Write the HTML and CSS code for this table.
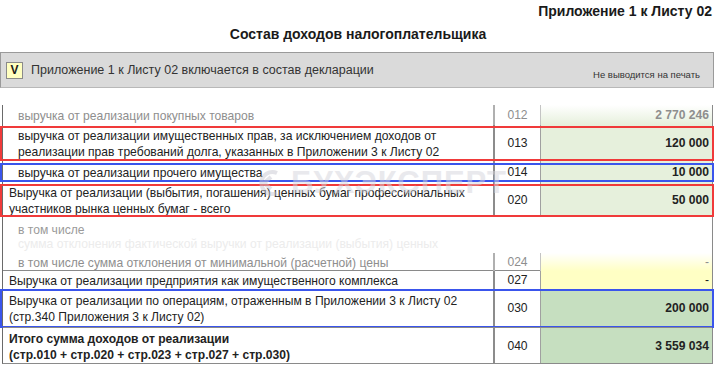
FILE: index.html
```html
<!DOCTYPE html>
<html lang="ru">
<head>
<meta charset="utf-8">
<link rel="stylesheet" href="styles.css">
</head>
<body>
<div class="page">
  <div class="app-no">Приложение 1 к Листу 02</div>
  <div class="title">Состав доходов налогоплательщика</div>
  <div class="bar">
    <div class="check">V</div>
    <div class="bar-text">Приложение 1 к Листу 02 включается в состав декларации</div>
    <div class="noprint">Не выводится на печать</div>
  </div>
  <div class="table">
    <div class="row r012 dim">
      <div class="desc ind">выручка от реализации покупных товаров</div>
      <div class="code">012</div>
      <div class="val fade-green">2 770 246</div>
    </div>
    <div class="row r013 box-red">
      <div class="desc ind">выручка от реализации имущественных прав, за исключением доходов от<br>реализации прав требований долга, указанных в Приложении 3 к Листу 02</div>
      <div class="code">013</div>
      <div class="val green">120 000</div>
    </div>
    <div class="row r014 box-blue">
      <div class="desc ind">выручка от реализации прочего имущества</div>
      <div class="code">014</div>
      <div class="val green">10 000</div>
    </div>
    <div class="row r020 box-red">
      <div class="desc">Выручка от реализации (выбытия, погашения) ценных бумаг профессиональных<br>участников рынка ценных бумаг - всего</div>
      <div class="code">020</div>
      <div class="val green">50 000</div>
    </div>
    <div class="fade-block">
      <div class="fade-line l1">в том числе</div>
      <div class="fade-line l2">сумма отклонения фактической выручки от реализации (выбытия) ценных</div>
    </div>
    <div class="row r024 dim">
      <div class="desc ind">в том числе сумма отклонения от минимальной (расчетной) цены</div>
      <div class="code">024</div>
      <div class="val fade-yellow plain">-</div>
    </div>
    <div class="row r027">
      <div class="desc">Выручка от реализации предприятия как имущественного комплекса</div>
      <div class="code">027</div>
      <div class="val yellow plain">-</div>
    </div>
    <div class="row r030 box-blue">
      <div class="desc">Выручка от реализации по операциям, отраженным в Приложении 3 к Листу 02<br>(стр.340 Приложения 3 к Листу 02)</div>
      <div class="code">030</div>
      <div class="val dgreen">200 000</div>
    </div>
    <div class="row r040 sep">
      <div class="desc bold">Итого сумма доходов от реализации<br>(стр.010 + стр.020 + стр.023 + стр.027 + стр.030)</div>
      <div class="code">040</div>
      <div class="val dgreen">3 559 034</div>
    </div>
    <div class="watermark">
      <svg class="wm-logo" width="28" height="30" viewBox="0 0 28 30"><path d="M22 5 A11 11 0 1 0 22 25" fill="none" stroke="#c8c8d2" stroke-width="4"/><path d="M16 9 L9 15 L16 21" fill="none" stroke="#c8c8d2" stroke-width="4"/></svg>
      <span class="wm-text">БУХЭКСПЕРТ</span>
    </div>
  </div>
</div>
</body>
</html>
```
FILE: styles.css
```css
* { box-sizing: border-box; }
body {
  margin: 0;
  background: #fff;
  font-family: "Liberation Sans", Arial, sans-serif;
  color: #1a1a1a;
}
.page { width: 716px; height: 365px; overflow: hidden; }
.app-no {
  margin-top: 3px;
  padding-right: 4px;
  text-align: right;
  font-weight: bold;
  font-size: 14px;
  line-height: 16px;
}
.title {
  margin-top: 7px;
  text-align: center;
  font-weight: bold;
  font-size: 14px;
  line-height: 16px;
}
.bar {
  margin-top: 10px;
  width: 714px;
  height: 36px;
  background: #dadada;
  border: 1px solid #9a9a9a;
  border-bottom-color: #b8b8b8;
  display: flex;
  align-items: center;
  padding-left: 5px;
  padding-right: 13px;
}
.check {
  width: 17px;
  height: 17px;
  background: #ffffc0;
  border: 1px solid #8a8a8a;
  font-weight: bold;
  font-size: 12px;
  line-height: 15px;
  text-align: center;
}
.bar-text {
  margin-left: 8px;
  font-size: 12.5px;
  color: #333;
  flex: 1;
}
.noprint {
  align-self: flex-end;
  margin-bottom: 7px;
  font-size: 9.5px;
  color: #333;
}
.table {
  position: relative;
  margin: 17px 0 0 2px;
  width: 711px;
  border-left: 1px solid #6a6a6a;
  border-right: 1px solid #8a8a8a;
  border-bottom: 1px solid #8a8a8a;
  font-size: 12.1px;
}
.row {
  position: relative;
  display: grid;
  grid-template-columns: 490px 48px 1fr;
}
.row.sep { border-top: 1px solid #8a8a8a; }
.desc {
  padding: 2px 0 0 6px;
  line-height: 16px;
  color: #222;
  align-self: center;
  white-space: nowrap;
}
.desc.ind { padding-left: 15px; }
.desc.bold { font-weight: bold; }
.code {
  border-left: 2px solid #8c8c8c;
  border-right: 1px solid #a0a0a0;
  display: flex;
  align-items: center;
  justify-content: center;
  color: #222;
}
.val {
  display: flex;
  align-items: center;
  justify-content: flex-end;
  padding-right: 3px;
  font-weight: bold;
  color: #222;
}
.val.plain { font-weight: normal; }
.green { background: #e6f0dc; }
.dgreen { background: #c6dfc0; }
.yellow { background: #ffffc4; }
.fade-green { background: linear-gradient(#ffffff, #e6f0dc); }
.fade-yellow { background: linear-gradient(#ffffff, #ffffc4); }
.dim .desc, .dim .code, .dim .val { color: #8e8e8e; }
.dim .code { border-left-color: #b0b0b0; border-right-color: #c4c4c4; }
.r012 { height: 20px; }
.r013 { height: 36px; }
.r014 { height: 21px; }
.r020 { height: 35px; }
.r024 { height: 18px; border-bottom: 1px solid #8a8a8a; }
.r027 { height: 18px; }
.r030 { height: 38px; }
.r040 { height: 36px; }
.fade-block {
  height: 36px;
  padding-top: 6px;
  line-height: 14px;
}
.fade-line { padding-left: 15px; white-space: nowrap; }
.fade-line.l1 { color: #9a9a9a; }
.fade-line.l2 { color: #ececec; }
.box-red::after, .box-blue::after {
  content: "";
  position: absolute;
  top: 1px;
  bottom: 0;
  left: -3px;
  right: -2px;
  border: 2px solid #f03a3a;
  pointer-events: none;
}
.box-blue::after { border-color: #3a55ec; }
.r014::after { top: 2px; bottom: 0; }
.r020::after { top: 2px; bottom: 0; }
.r030::after { top: 0; bottom: -1px; }
.watermark {
  position: absolute;
  left: 252px;
  top: 60px;
  display: flex;
  align-items: center;
  gap: 8px;
  opacity: 0.5;
  pointer-events: none;
}
.wm-text {
  font-size: 31px;
  font-weight: bold;
  letter-spacing: 1px;
  color: #d4d4dc;
}
```
